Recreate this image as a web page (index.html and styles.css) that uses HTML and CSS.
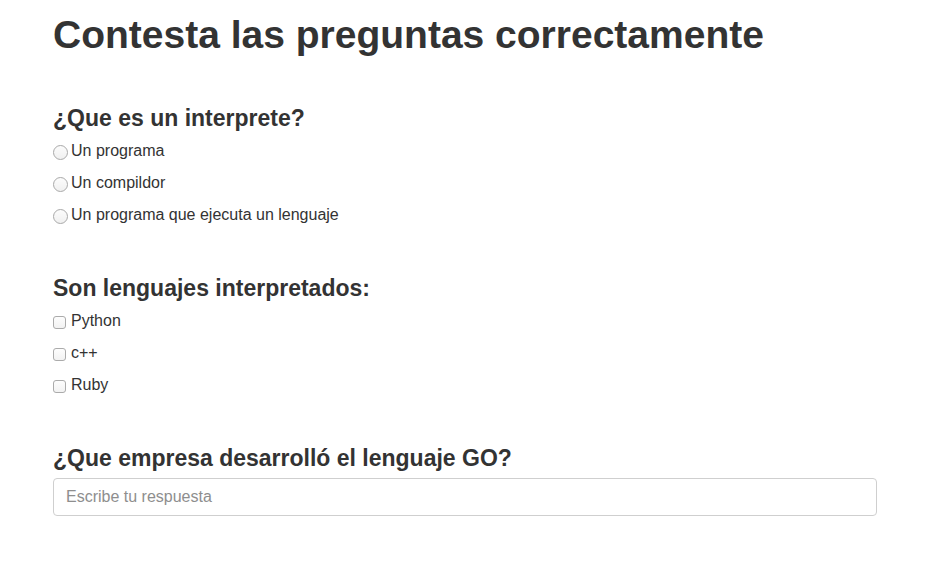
FILE: index.html
```html
<!DOCTYPE html>
<html lang="es">
<head>
<meta charset="utf-8">
<title>Preguntas</title>
<link rel="stylesheet" href="styles.css">
</head>
<body>
<div class="container">
  <h1 class="title">Contesta las preguntas correctamente</h1>

  <section class="question">
    <h3 class="q-title">¿Que es un interprete?</h3>
    <div class="options">
      <label class="option"><input class="radio" type="radio" name="q1"><span>Un programa</span></label>
      <label class="option"><input class="radio" type="radio" name="q1"><span>Un compildor</span></label>
      <label class="option"><input class="radio" type="radio" name="q1"><span>Un programa que ejecuta un lenguaje</span></label>
    </div>
  </section>

  <section class="question">
    <h3 class="q-title">Son lenguajes interpretados:</h3>
    <div class="options">
      <label class="option"><input class="check" type="checkbox"><span>Python</span></label>
      <label class="option"><input class="check" type="checkbox"><span>c++</span></label>
      <label class="option"><input class="check" type="checkbox"><span>Ruby</span></label>
    </div>
  </section>

  <section class="question">
    <h3 class="q-title q-title-input">¿Que empresa desarrolló el lenguaje GO?</h3>
    <input class="text-input" type="text" placeholder="Escribe tu respuesta">
  </section>
</div>
</body>
</html>
```

FILE: styles.css
```css
html, body {
  margin: 0;
  padding: 0;
  background: #fff;
}
body {
  font-family: "Liberation Sans", Arial, sans-serif;
  color: #333;
  font-size: 16px;
  line-height: 20px;
}
.container {
  display: flex;
  flex-direction: column;
  gap: 50px;
  padding: 14px 54px 0 53px;
}
.title {
  font-size: 39px;
  font-weight: 700;
  line-height: 42px;
  margin: 0 0 -1px;
  color: #333;
}
.question {
  display: flex;
  flex-direction: column;
}
.q-title {
  font-size: 23px;
  font-weight: 700;
  line-height: 26px;
  margin: 0 0 10px;
  color: #333;
}
.q-title-input {
  margin-bottom: 7px;
}
.options {
  display: flex;
  flex-direction: column;
  gap: 12px;
}
.option {
  display: flex;
  align-items: center;
  height: 20px;
  font-size: 16px;
  color: #333;
}
.radio {
  appearance: none;
  -webkit-appearance: none;
  box-sizing: border-box;
  width: 15px;
  height: 15px;
  margin: 0 3px 0 0;
  border: 1px solid #a9a9a9;
  border-radius: 50%;
  background: linear-gradient(#fcfcfc, #f0f0f0);
  position: relative;
  top: 1px;
}
.check {
  appearance: none;
  -webkit-appearance: none;
  box-sizing: border-box;
  width: 13px;
  height: 13px;
  margin: 0 5px 0 0;
  border: 1px solid #ababab;
  border-radius: 3px;
  background: linear-gradient(#fdfdfd, #f2f2f2);
  position: relative;
  top: 1px;
}
.text-input {
  box-sizing: border-box;
  width: 100%;
  height: 38px;
  margin: 0;
  padding: 6px 12px;
  font-family: inherit;
  font-size: 16px;
  color: #495057;
  background: #fff;
  border: 1px solid #cfcfcf;
  border-radius: 4px;
  outline: none;
}
.text-input::placeholder {
  color: #8e8e8e;
}
```
